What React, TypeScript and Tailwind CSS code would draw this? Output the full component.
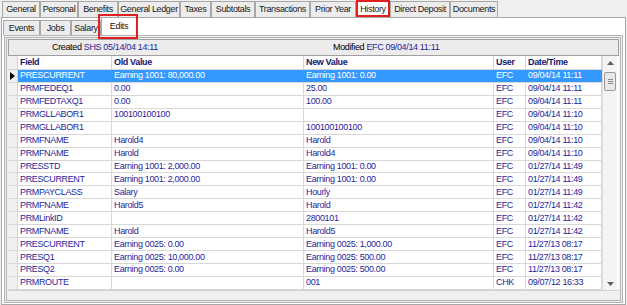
const font = { fontFamily: '"Liberation Sans", Arial, sans-serif' };

const topTabs = [
  { label: 'General', w: 38 },
  { label: 'Personal', w: 38 },
  { label: 'Benefits', w: 40 },
  { label: 'General Ledger', w: 62 },
  { label: 'Taxes', w: 31 },
  { label: 'Subtotals', w: 44 },
  { label: 'Transactions', w: 55 },
  { label: 'Prior Year', w: 46 },
  { label: 'History', w: 34, active: true },
  { label: 'Direct Deposit', w: 60 },
  { label: 'Documents', w: 48 },
];

const subTabs = [
  { label: 'Events', w: 37 },
  { label: 'Jobs', w: 31 },
  { label: 'Salary', w: 30 },
  { label: 'Edits', w: 36, active: true },
];

const rows: [string, string, string, string, string][] = [
  ['PRESCURRENT', 'Earning 1001: 80,000.00', 'Earning 1001: 0.00', 'EFC', '09/04/14 11:11'],
  ['PRMFEDEQ1', '0.00', '25.00', 'EFC', '09/04/14 11:11'],
  ['PRMFEDTAXQ1', '0.00', '100.00', 'EFC', '09/04/14 11:11'],
  ['PRMGLLABOR1', '100100100100', '', 'EFC', '09/04/14 11:10'],
  ['PRMGLLABOR1', '', '100100100100', 'EFC', '09/04/14 11:10'],
  ['PRMFNAME', 'Harold4', 'Harold', 'EFC', '09/04/14 11:10'],
  ['PRMFNAME', 'Harold', 'Harold4', 'EFC', '09/04/14 11:10'],
  ['PRESSTD', 'Earning 1001: 2,000.00', 'Earning 1001: 0.00', 'EFC', '01/27/14 11:49'],
  ['PRESCURRENT', 'Earning 1001: 2,000.00', 'Earning 1001: 0.00', 'EFC', '01/27/14 11:49'],
  ['PRMPAYCLASS', 'Salary', 'Hourly', 'EFC', '01/27/14 11:49'],
  ['PRMFNAME', 'Harold5', 'Harold', 'EFC', '01/27/14 11:42'],
  ['PRMLinkID', '', '2800101', 'EFC', '01/27/14 11:42'],
  ['PRMFNAME', 'Harold', 'Harold5', 'EFC', '01/27/14 11:42'],
  ['PRESCURRENT', 'Earning 0025: 0.00', 'Earning 0025: 1,000.00', 'EFC', '11/27/13 08:17'],
  ['PRESQ1', 'Earning 0025: 10,000.00', 'Earning 0025: 500.00', 'EFC', '11/27/13 08:17'],
  ['PRESQ2', 'Earning 0025: 0.00', 'Earning 0025: 500.00', 'EFC', '11/27/13 08:17'],
  ['PRMROUTE', '', '001', 'CHK', '09/07/12 16:33'],
];

const colW = ['w-[94px]', 'w-[192px]', 'w-[190px]', 'w-[32px]', 'w-[76px]'];
const headers = ['Field', 'Old Value', 'New Value', 'User', 'Date/Time'];

function Scrollbar() {
  return (
    <div className="w-[15px] bg-[#f4f4f4] border-l border-[#e0e0e0] flex flex-col items-center">
      <div className="h-[14px] flex items-center justify-center">
        <svg width="7" height="4" viewBox="0 0 7 4"><path d="M0 4 L3.5 0 L7 4Z" fill="#606060" /></svg>
      </div>
      <div className="mt-[2px] w-[12px] h-[19px] rounded-[2px] border border-[#9a9a9a] bg-[#e8e8e8] flex flex-col items-center justify-center gap-[1px]">
        <div className="w-[5px] h-px bg-[#888]" />
        <div className="w-[5px] h-px bg-[#888]" />
        <div className="w-[5px] h-px bg-[#888]" />
      </div>
      <div className="flex-1" />
      <div className="h-[12px] flex items-center justify-center">
        <svg width="7" height="4" viewBox="0 0 7 4"><path d="M0 0 L3.5 4 L7 0Z" fill="#606060" /></svg>
      </div>
    </div>
  );
}

export default function App() {
  return (
    <div className="w-[627px] h-[305px] bg-[#f0f0f0] relative overflow-hidden text-[9px] tracking-[-0.35px] leading-none" style={font}>
      {/* main tabs */}
      <div className="flex h-[17px] pl-[2px] items-end">
        {topTabs.map((t) => (
          <div
            key={t.label}
            className={`h-[16px] flex items-center justify-center whitespace-nowrap overflow-hidden border border-b-0 border-[#a8a8a8] text-[#202020] ${t.active ? 'bg-white' : 'bg-[#ececec]'}`}
            style={{ width: t.w }}
          >
            {t.label}
          </div>
        ))}
      </div>

      {/* main panel */}
      <div className="mx-[1px] h-[288px] bg-white border border-[#a8a8a8] flex flex-col">
        <div className="flex h-[17px] pl-[1px] items-end">
          {subTabs.map((t) => (
            <div
              key={t.label}
              className={`flex items-center justify-center whitespace-nowrap border border-b-0 border-[#a8a8a8] text-[#202020] ${t.active ? 'h-[18px] bg-white' : 'h-[15px] bg-[#ececec]'}`}
              style={{ width: t.w }}
            >
              {t.label}
            </div>
          ))}
        </div>

        {/* group frame */}
        <div className="flex-1 mx-[2px] mb-[1px] border-[3px] border-double border-[#b4b4b4] bg-[#f0f0f0] flex flex-col">
          <div className="h-[17px] mx-[1px] mt-[1px] bg-[#ececec] border border-[#a0a0a0] flex items-center text-black">
            <span className="pl-[43px] w-[324px]">
              Created <span className="text-[#1f1f9c]">SHS 05/14/04 14:11</span>
            </span>
            <span>
              Modified <span className="text-[#1f1f9c]">EFC 09/04/14 11:11</span>
            </span>
          </div>

          {/* grid */}
          <div className="flex mx-[1px] h-[235px] bg-white border-b border-[#d0d0d0]">
            <div className="flex flex-col">
              <div className="flex h-[14px] border-b border-[#d4d4d4]">
                <div className="w-[10px] bg-[#f0f0f0] border-r border-[#d4d4d4]" />
                {headers.map((h, i) => (
                  <div key={h} className={`${colW[i]} pl-[2px] border-r border-[#d4d4d4] font-bold text-[#161670] flex items-center`}>
                    {h}
                  </div>
                ))}
              </div>
              {rows.map((r, ri) => {
                const sel = ri === 0;
                return (
                  <div key={ri} className="flex h-[13px] border-b border-[#d8d8d8]">
                    <div className="w-[10px] bg-[#f0f0f0] border-r border-[#d4d4d4] flex items-center justify-center">
                      {sel && (
                        <svg width="5" height="8" viewBox="0 0 5 8"><path d="M0 0 L5 4 L0 8Z" fill="#000" /></svg>
                      )}
                    </div>
                    {r.map((c, ci) => (
                      <div
                        key={ci}
                        className={`${colW[ci]} pl-[2px] flex items-center whitespace-nowrap overflow-hidden ${sel ? 'bg-[#3399ff] text-white border-r border-[#3399ff]' : 'text-[#1f1f9c] border-r border-[#d8d8d8]'}`}
                      >
                        {c}
                      </div>
                    ))}
                  </div>
                );
              })}
            </div>
            <Scrollbar />
          </div>
          <div className="flex-1" />
        </div>
      </div>

      {/* red highlight boxes */}
      <div className="absolute left-[356px] top-0 w-[34px] h-[17px] border-2 border-[#e02020]" />
      <div className="absolute left-[98px] top-[14px] w-[40px] h-[25px] border-2 border-[#e02020]" />
    </div>
  );
}
